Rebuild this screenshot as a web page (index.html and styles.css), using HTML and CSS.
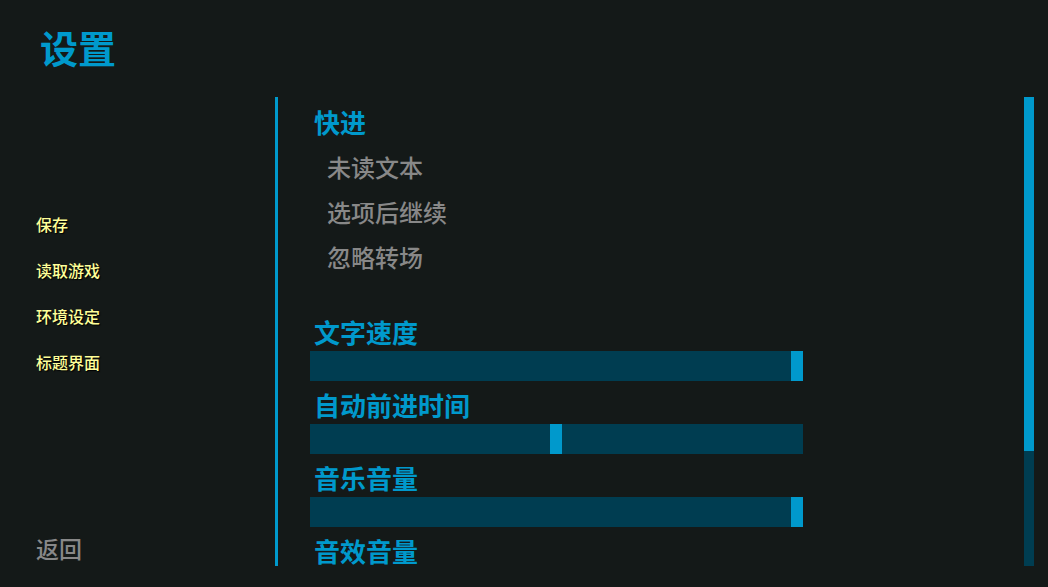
FILE: index.html
```html
<!DOCTYPE html>
<html lang="zh-CN">
<head>
<meta charset="utf-8">
<meta name="viewport" content="width=device-width, initial-scale=1">
<title>设置</title>
<link rel="stylesheet" href="styles.css">
</head>
<body>
<div class="screen">
  <header class="header"><h1 class="title">设置</h1></header>
  <div class="layout">
    <aside class="sidebar">
      <nav class="nav">
        <button class="nav-item" type="button">保存</button>
        <button class="nav-item" type="button">读取游戏</button>
        <button class="nav-item" type="button">环境设定</button>
        <button class="nav-item" type="button">标题界面</button>
      </nav>
      <button class="return" type="button">返回</button>
    </aside>
    <main class="content">
      <section class="skip">
        <h2 class="label">快进</h2>
        <button class="option" type="button">未读文本</button>
        <button class="option" type="button">选项后继续</button>
        <button class="option" type="button">忽略转场</button>
      </section>
      <section class="sliders">
        <div class="field">
          <label class="label" for="text-speed">文字速度</label>
          <input class="slider" id="text-speed" type="range" min="0" max="100" value="100">
        </div>
        <div class="field">
          <label class="label" for="auto-time">自动前进时间</label>
          <input class="slider" id="auto-time" type="range" min="0" max="100" value="50">
        </div>
        <div class="field">
          <label class="label" for="music">音乐音量</label>
          <input class="slider" id="music" type="range" min="0" max="100" value="100">
        </div>
        <div class="field">
          <label class="label" for="sound">音效音量</label>
          <input class="slider" id="sound" type="range" min="0" max="100" value="100">
        </div>
      </section>
    </main>
    <div class="scrollbar"><div class="scroll-thumb" style="height: 75.5%"></div></div>
  </div>
</div>
</body>
</html>
```
FILE: styles.css
```css
* {
  box-sizing: border-box;
}

body {
  margin: 0;
  background: #141918;
  color: #0099cc;
  font-family: "KaiTi", "STKaiti", "Noto Sans CJK SC", sans-serif;
}

button {
  padding: 0;
  border: 0;
  background: none;
  font-family: inherit;
  text-align: left;
  cursor: pointer;
}

.screen {
  display: flex;
  flex-direction: column;
  height: 100vh;
  padding-bottom: 21px;
  overflow: hidden;
}

.header {
  flex: none;
  height: 97px;
  padding: 19px 40px 0;
}

.title {
  margin: 0;
  font-size: 38px;
  line-height: 56px;
  font-weight: 700;
}

.layout {
  display: flex;
  flex: 1;
  min-height: 0;
  padding-right: 14px;
}

.sidebar {
  display: flex;
  flex: none;
  flex-direction: column;
  justify-content: space-between;
  width: 275px;
  padding-left: 36px;
}

.nav {
  display: flex;
  flex-direction: column;
  align-items: flex-start;
  gap: 22px;
  padding-top: 115px;
}

.nav-item {
  color: #ffff99;
  font-size: 16px;
  line-height: 24px;
  font-weight: 500;
  text-shadow: 1px 1px 1px #000000;
}

.return {
  align-self: flex-start;
  color: #888888;
  font-size: 23px;
  line-height: 36px;
  font-weight: 500;
}

.content {
  flex: 1;
  min-width: 0;
  padding: 6px 10px 0 32px;
  border-left: 3px solid #0099cc;
  overflow: hidden;
}

.label {
  display: block;
  margin: 0;
  padding: 0 0 2px 4px;
  font-size: 26px;
  line-height: 34px;
  font-weight: 700;
}

.skip {
  display: flex;
  flex-direction: column;
  align-items: flex-start;
}

.skip .label {
  padding-top: 2px;
  padding-bottom: 5px;
}

.option {
  padding-left: 17px;
  color: #888888;
  font-size: 24px;
  line-height: 45px;
  font-weight: 500;
}

.sliders {
  display: flex;
  flex-direction: column;
  gap: 7px;
  width: 70%;
  padding-top: 36px;
}

.slider {
  display: block;
  width: 100%;
  height: 30px;
  margin: 0;
  background: #003d51;
  appearance: none;
}

.slider::-webkit-slider-thumb {
  width: 12px;
  height: 30px;
  border: 0;
  border-radius: 0;
  background: #0099cc;
  appearance: none;
}

.scrollbar {
  flex: none;
  width: 10px;
  background: #003d51;
}

.scroll-thumb {
  background: #0099cc;
}
```
